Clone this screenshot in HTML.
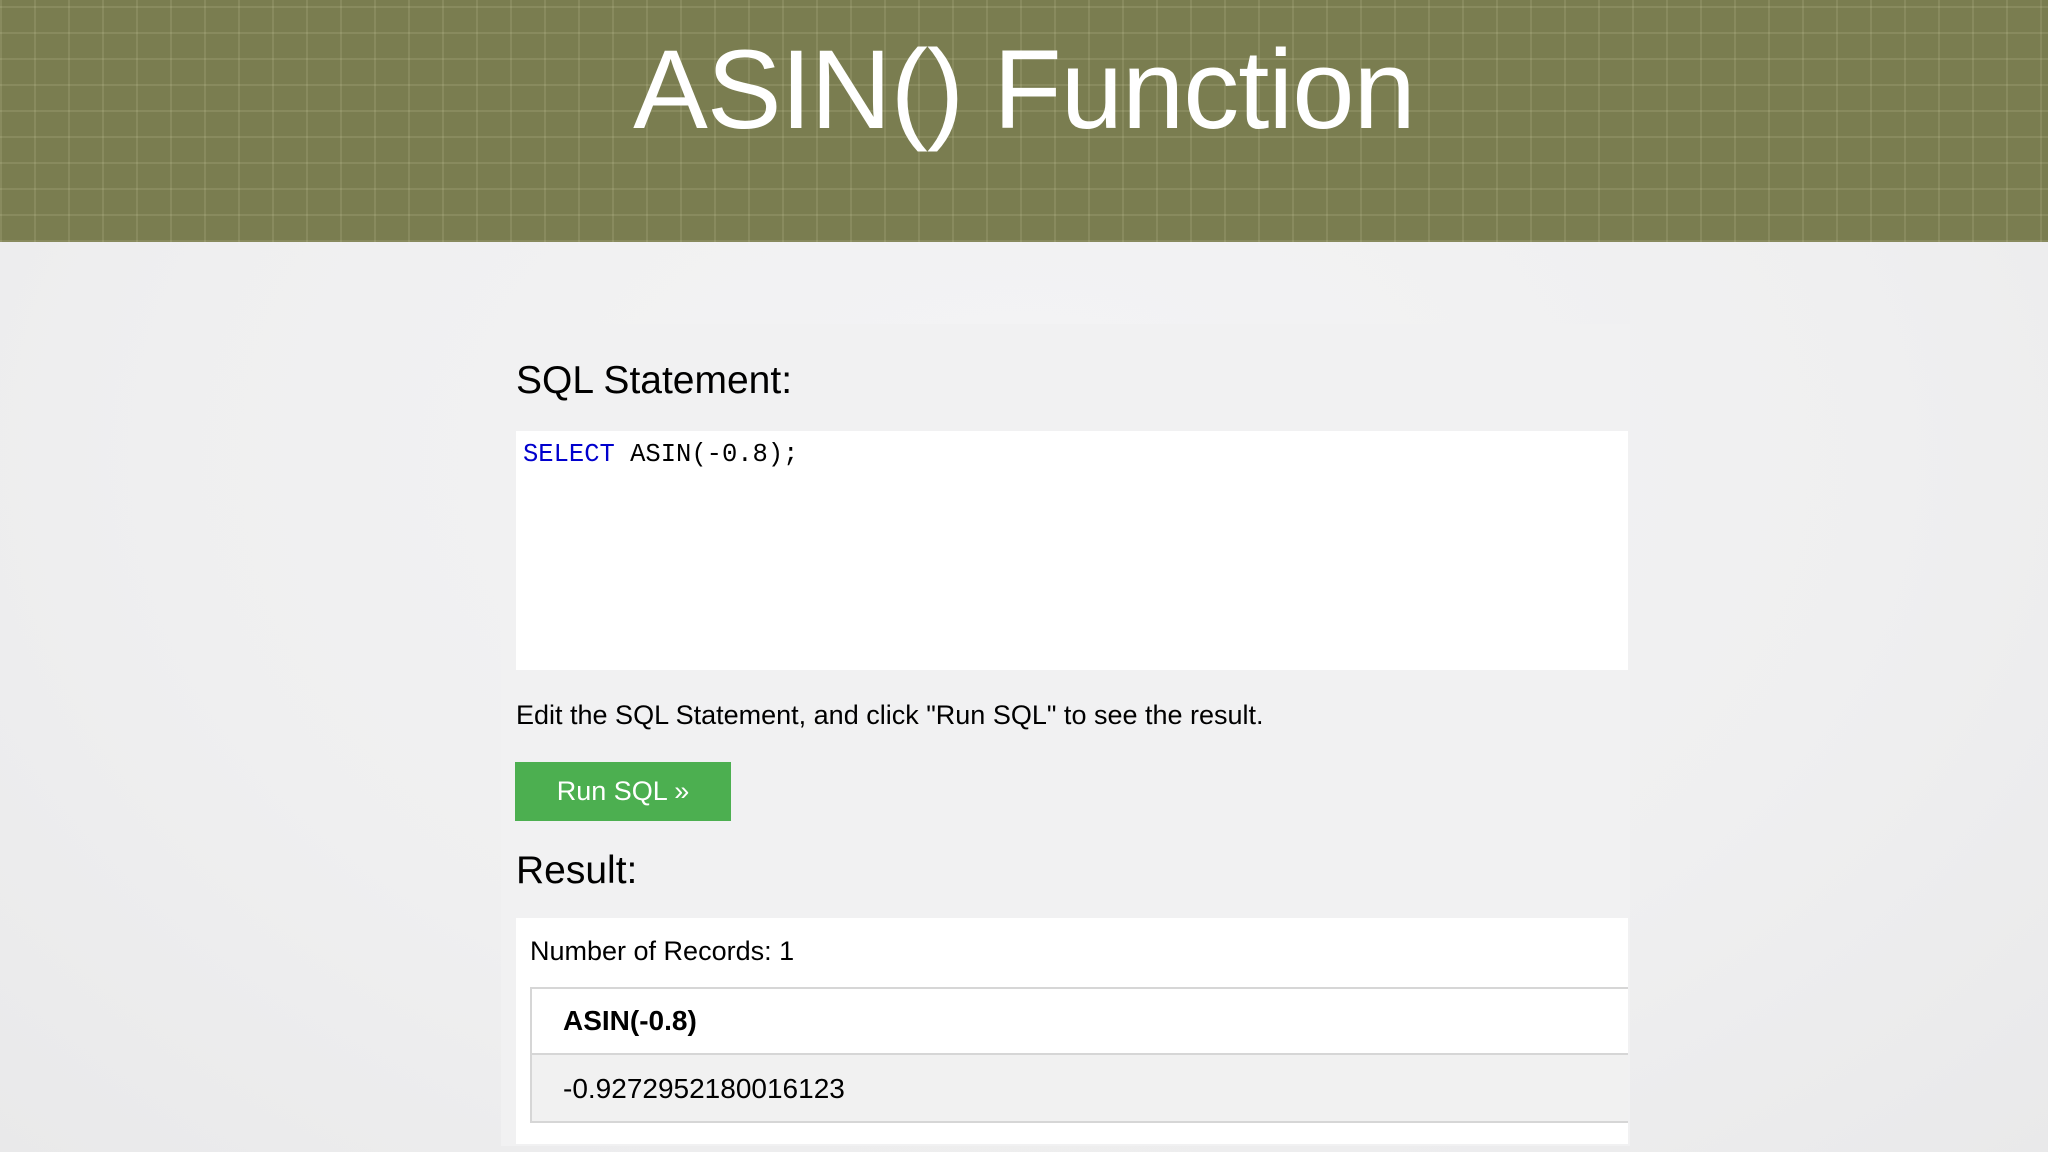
<!DOCTYPE html>
<html><head><meta charset="utf-8"><style>
*{margin:0;padding:0;box-sizing:border-box}
body{width:2048px;height:1152px;overflow:hidden;background:radial-gradient(ellipse at 50% 40%,#f4f4f5 0%,#efeff0 60%,#e9e9ea 100%);font-family:"Liberation Sans",sans-serif;color:#000;position:relative}
.hdr{position:absolute;left:0;top:0;width:2048px;height:242px;background-color:#7a7d50;
background-image:repeating-linear-gradient(90deg,rgba(200,200,160,.18) 0 2px,transparent 2px 34px),repeating-linear-gradient(0deg,rgba(200,200,160,.18) 0 2px,transparent 2px 26px)}
.hdr h1{position:absolute;left:0;width:2048px;top:30px;text-align:center;color:#fff;font-weight:normal;font-size:112px;line-height:120px;letter-spacing:-1px}
.panel{position:absolute;left:501px;top:324px;width:1129px;height:822px;background:#f1f1f2}
.abs{position:absolute}
.h2{font-size:39px;left:516px;top:359px}
.code{left:516px;top:431px;width:1112px;height:239px;background:#fff;font-family:"Liberation Mono",monospace;font-size:25.5px;padding:9px 0 0 7px}
.code b{font-weight:normal;color:#0000cd}
.edit{left:516px;top:700px;font-size:27px}
.btn{left:515px;top:762px;width:216px;height:59px;background:#4caf50;color:#fff;font-size:27px;line-height:59px;text-align:center}
.res{font-size:39px;left:516px;top:849px}
.rbox{left:516px;top:918px;width:1112px;height:226px;background:#fff}
.nr{left:530px;top:936px;font-size:27px}
.tbl{left:530px;top:987px;width:1098px;height:136px;border:2px solid #d6d6d6;border-right:none}
.th{position:absolute;left:0;top:0;width:100%;height:66px;border-bottom:2px solid #d6d6d6;background:#fff;font-weight:bold;font-size:28px;padding:16px 0 0 31px}
.td{position:absolute;left:0;top:66px;width:100%;height:66px;background:#f1f1f1;font-size:28px;padding:18px 0 0 31px}
</style></head><body>
<div class="hdr"><h1>ASIN() Function</h1></div>
<div class="panel"></div>
<div class="abs h2">SQL Statement:</div>
<div class="abs code"><b>SELECT</b> ASIN(-0.8);</div>
<div class="abs edit">Edit the SQL Statement, and click "Run SQL" to see the result.</div>
<div class="abs btn">Run SQL »</div>
<div class="abs res">Result:</div>
<div class="abs rbox"></div>
<div class="abs nr">Number of Records: 1</div>
<div class="abs tbl"><div class="th">ASIN(-0.8)</div><div class="td">-0.9272952180016123</div></div>
</body></html>
